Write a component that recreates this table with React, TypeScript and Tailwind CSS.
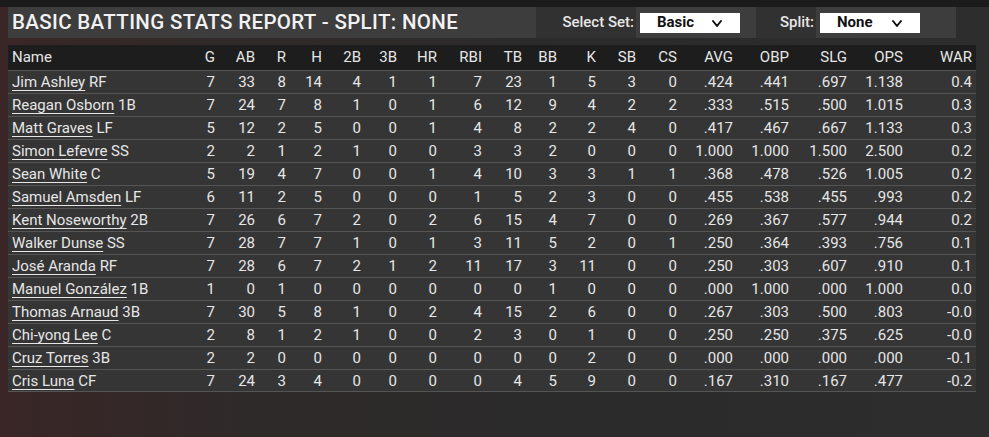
import React from "react"

type Row = {
  name: string
  pos: string
  stats: (string | number)[]
}

const cols = ["G", "AB", "R", "H", "2B", "3B", "HR", "RBI", "TB", "BB", "K", "SB", "CS", "AVG", "OBP", "SLG", "OPS", "WAR"]

const rows: Row[] = [
  { name: "Jim Ashley", pos: "RF", stats: [7, 33, 8, 14, 4, 1, 1, 7, 23, 1, 5, 3, 0, ".424", ".441", ".697", "1.138", "0.4"] },
  { name: "Reagan Osborn", pos: "1B", stats: [7, 24, 7, 8, 1, 0, 1, 6, 12, 9, 4, 2, 2, ".333", ".515", ".500", "1.015", "0.3"] },
  { name: "Matt Graves", pos: "LF", stats: [5, 12, 2, 5, 0, 0, 1, 4, 8, 2, 2, 4, 0, ".417", ".467", ".667", "1.133", "0.3"] },
  { name: "Simon Lefevre", pos: "SS", stats: [2, 2, 1, 2, 1, 0, 0, 3, 3, 2, 0, 0, 0, "1.000", "1.000", "1.500", "2.500", "0.2"] },
  { name: "Sean White", pos: "C", stats: [5, 19, 4, 7, 0, 0, 1, 4, 10, 3, 3, 1, 1, ".368", ".478", ".526", "1.005", "0.2"] },
  { name: "Samuel Amsden", pos: "LF", stats: [6, 11, 2, 5, 0, 0, 0, 1, 5, 2, 3, 0, 0, ".455", ".538", ".455", ".993", "0.2"] },
  { name: "Kent Noseworthy", pos: "2B", stats: [7, 26, 6, 7, 2, 0, 2, 6, 15, 4, 7, 0, 0, ".269", ".367", ".577", ".944", "0.2"] },
  { name: "Walker Dunse", pos: "SS", stats: [7, 28, 7, 7, 1, 0, 1, 3, 11, 5, 2, 0, 1, ".250", ".364", ".393", ".756", "0.1"] },
  { name: "José Aranda", pos: "RF", stats: [7, 28, 6, 7, 2, 1, 2, 11, 17, 3, 11, 0, 0, ".250", ".303", ".607", ".910", "0.1"] },
  { name: "Manuel González", pos: "1B", stats: [1, 0, 1, 0, 0, 0, 0, 0, 0, 1, 0, 0, 0, ".000", "1.000", ".000", "1.000", "0.0"] },
  { name: "Thomas Arnaud", pos: "3B", stats: [7, 30, 5, 8, 1, 0, 2, 4, 15, 2, 6, 0, 0, ".267", ".303", ".500", ".803", "-0.0"] },
  { name: "Chi-yong Lee", pos: "C", stats: [2, 8, 1, 2, 1, 0, 0, 2, 3, 0, 1, 0, 0, ".250", ".250", ".375", ".625", "-0.0"] },
  { name: "Cruz Torres", pos: "3B", stats: [2, 2, 0, 0, 0, 0, 0, 0, 0, 0, 2, 0, 0, ".000", ".000", ".000", ".000", "-0.1"] },
  { name: "Cris Luna", pos: "CF", stats: [7, 24, 3, 4, 0, 0, 0, 0, 4, 5, 9, 0, 0, ".167", ".310", ".167", ".477", "-0.2"] },
]

const grid =
  "grid grid-cols-[182px_29px_40px_31px_36px_39px_36px_40px_45px_40px_35px_39px_40px_41px_56px_56px_58px_56px_69px]"

const Chevron = () => (
  <svg width="12" height="10" viewBox="0 0 12 10" fill="none" stroke="#111" strokeWidth="2" strokeLinecap="round" strokeLinejoin="round">
    <polyline points="2,3 6,8 10,3" />
  </svg>
)

const SelectBox = ({ value, width }: { value: string; width: string }) => (
  <div className={`flex h-[20px] ${width} items-center justify-between bg-white pl-[17px] pr-[17px]`}>
    <span className="text-[15px] font-bold text-[#111]">{value}</span>
    <Chevron />
  </div>
)

export default function App() {
  return (
    <div
      className="relative h-[437px] w-[989px] overflow-hidden bg-[linear-gradient(90deg,#3a2626_0%,#2f2a2a_25%,#2b2b2b_60%,#2d2d2d_100%)] text-[#e6e6e6]"
      style={{ fontFamily: "Roboto, 'Liberation Sans', sans-serif" }}
    >
      <div className="h-[7px] bg-[#1c1b1b]" />

      {/* top bar */}
      <div className="ml-[8px] flex h-[31px] w-[948px]">
        <div className="flex w-[528px] items-center bg-[#3d3d3d] pl-[4px]">
          <span className="text-[20.5px] font-medium tracking-[0.35px] text-[#f2f2f2]">
            BASIC BATTING STATS REPORT - SPLIT: NONE
          </span>
        </div>
        <div className="flex w-[100px] items-center justify-end bg-[#313131] pr-[2px]">
          <span className="text-[15px] font-medium">Select Set:</span>
        </div>
        <div className="flex w-[120px] items-center bg-[#3d3d3d] pl-[4px]">
          <SelectBox value="Basic" width="w-[100px]" />
        </div>
        <div className="flex w-[60px] items-center justify-end bg-[#313131] pr-[2px]">
          <span className="text-[15px] font-medium">Split:</span>
        </div>
        <div className="flex w-[140px] items-center bg-[#3d3d3d] pl-[4px]">
          <SelectBox value="None" width="w-[100px]" />
        </div>
      </div>

      {/* table */}
      <div className="ml-[8px] mt-[7px] w-[968px] text-[15px]">
        <div className={`${grid} h-[25px] items-center bg-[#1d1d1d]`}>
          <div className="pl-[4px]">Name</div>
          {cols.map((c) => (
            <div key={c} className="pr-[4px] text-right">
              {c}
            </div>
          ))}
        </div>
        {rows.map((r) => (
          <div key={r.name} className={`${grid} h-[23px] items-center border-t border-[#555555] bg-[#353535] last:border-b`}>
            <div className="whitespace-nowrap pl-[4px]">
              <span className="underline decoration-1 underline-offset-[3px]">{r.name}</span> {r.pos}
            </div>
            {r.stats.map((s, i) => (
              <div key={i} className="pr-[4px] text-right">
                {s}
              </div>
            ))}
          </div>
        ))}
      </div>
    </div>
  )
}
